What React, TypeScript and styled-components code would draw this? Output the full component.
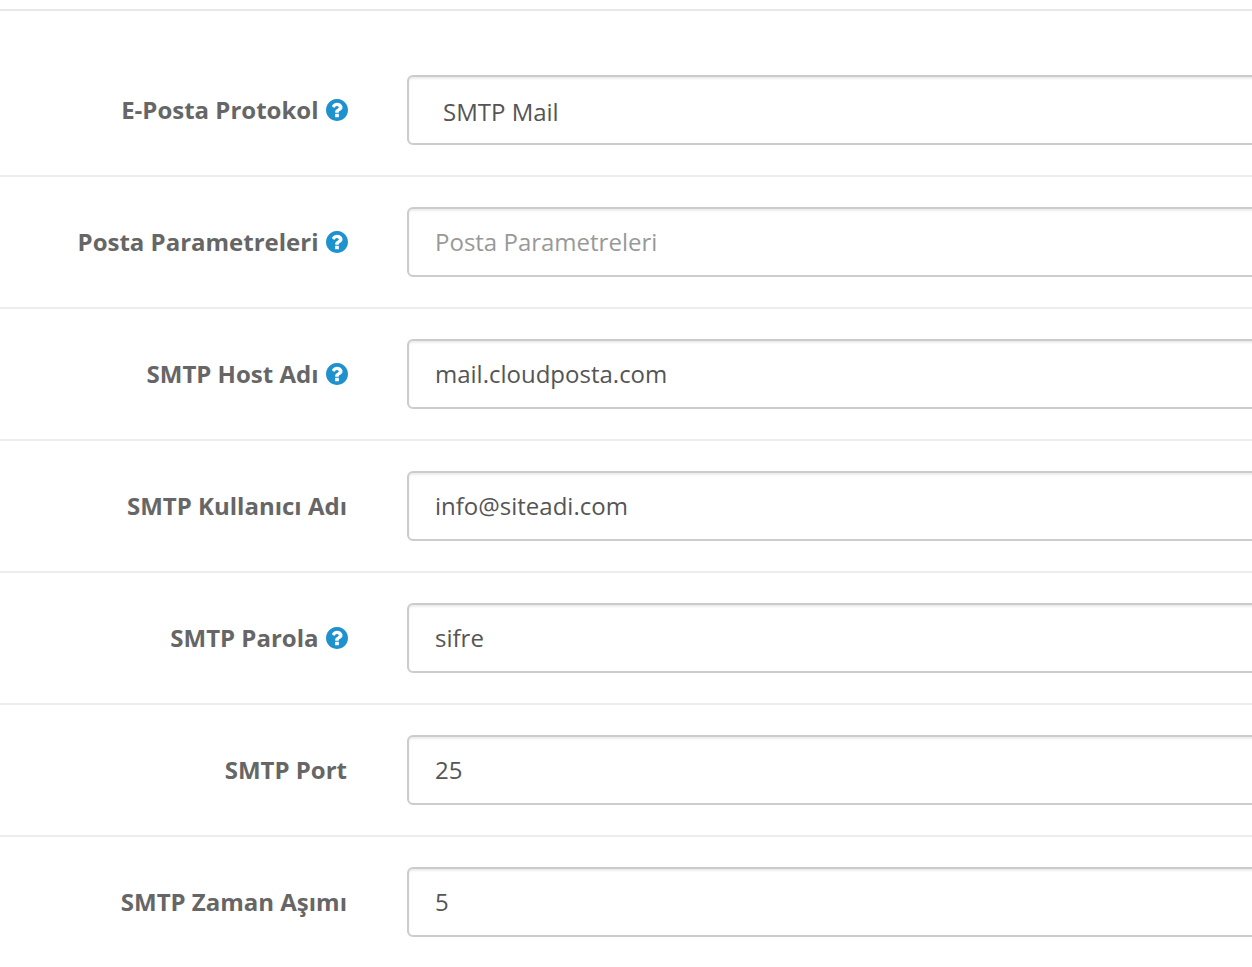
import React from "react";
import styled, { createGlobalStyle } from "styled-components";

const Global = createGlobalStyle`
  html, body { margin: 0; padding: 0; background: #fff; overflow: hidden; }
  body { font-family: "Open Sans", sans-serif; font-size: 24px; color: #666; }
`;

const Page = styled.div`
  width: 1252px;
  height: 967px;
  overflow: hidden;
  padding-top: 9px;
  box-sizing: border-box;
`;

const Form = styled.form`
  width: 1600px;
  border-top: 2px solid #e8e8e8;
  padding-top: 34px;
`;

const Row = styled.div`
  display: grid;
  grid-template-columns: 348px 1fr;
  column-gap: 59px;
  align-items: center;
  padding: 30px 0;
  border-bottom: 2px solid #ededed;
  &:last-child { border-bottom: none; }
`;

const Label = styled.label<{ $hasHelp: boolean }>`
  display: flex;
  justify-content: flex-end;
  align-items: center;
  gap: 7.5px;
  padding-right: ${(p) => (p.$hasHelp ? "0" : "1px")};
  font-size: 24px;
  font-weight: 700;
  line-height: 34px;
  color: #666;
`;

const Help = styled.svg`
  display: block;
  width: 22px;
  height: 22px;
  fill: #1e91cf;
  flex: none;
`;

const fieldBase = `
  display: block;
  width: 100%;
  height: 70px;
  box-sizing: border-box;
  border: 2px solid #ccc;
  border-radius: 6px;
  background: #fff;
  box-shadow: inset 0 2px 2px rgba(0, 0, 0, 0.075);
  font-family: "Open Sans", sans-serif;
  font-size: 24px;
  color: #555;
  outline: none;
`;

const Input = styled.input`
  ${fieldBase}
  padding: 0 26px 2px;
  &::placeholder { color: #999; opacity: 1; }
`;

const Select = styled.select`
  ${fieldBase}
  padding: 2px 26px 0 34px;
  appearance: none;
`;

type Field = { label: string; help?: boolean; value?: string; placeholder?: string; select?: boolean };

const fields: Field[] = [
  { label: "E-Posta Protokol", help: true, value: "SMTP Mail", select: true },
  { label: "Posta Parametreleri", help: true, placeholder: "Posta Parametreleri" },
  { label: "SMTP Host Adı", help: true, value: "mail.cloudposta.com" },
  { label: "SMTP Kullanıcı Adı", value: "info@siteadi.com" },
  { label: "SMTP Parola", help: true, value: "sifre" },
  { label: "SMTP Port", value: "25" },
  { label: "SMTP Zaman Aşımı", value: "5" },
];

const QUESTION_CIRCLE =
  "M1024 1376v-192q0-14-9-23t-23-9h-192q-14 0-23 9t-9 23v192q0 14 9 23t23 9h192q14 0 23-9t9-23zm256-672q0-88-55.5-163t-138.5-116-170-41q-243 0-371 213-15 24 8 42l132 100q7 6 19 6 16 0 25-12 53-68 86-92 34-24 86-24 48 0 85.5 26t37.5 59q0 38-20 61t-68 45q-63 28-115.5 86.5t-52.5 125.5v36q0 14 9 23t23 9h192q14 0 23-9t9-23q0-19 21.5-49.5t54.5-49.5q32-18 49-28.5t46-35 44.5-48 28-60.5 12.5-81zm384 192q0 209-103 385.5t-279.5 279.5-385.5 103-385.5-103-279.5-279.5-103-385.5 103-385.5 279.5-279.5 385.5-103 385.5 103 279.5 279.5 103 385.5z";

export default function App() {
  return (
    <Page>
      <Global />
      <Form>
        {fields.map((f) => (
          <Row key={f.label}>
            <Label $hasHelp={!!f.help}>
              {f.label}
              {f.help && (
                <Help viewBox="128 128 1536 1536">
                  <path d={QUESTION_CIRCLE} />
                </Help>
              )}
            </Label>
            {f.select ? (
              <Select defaultValue={f.value}>
                <option>{f.value}</option>
              </Select>
            ) : (
              <Input defaultValue={f.value} placeholder={f.placeholder} />
            )}
          </Row>
        ))}
      </Form>
    </Page>
  );
}
